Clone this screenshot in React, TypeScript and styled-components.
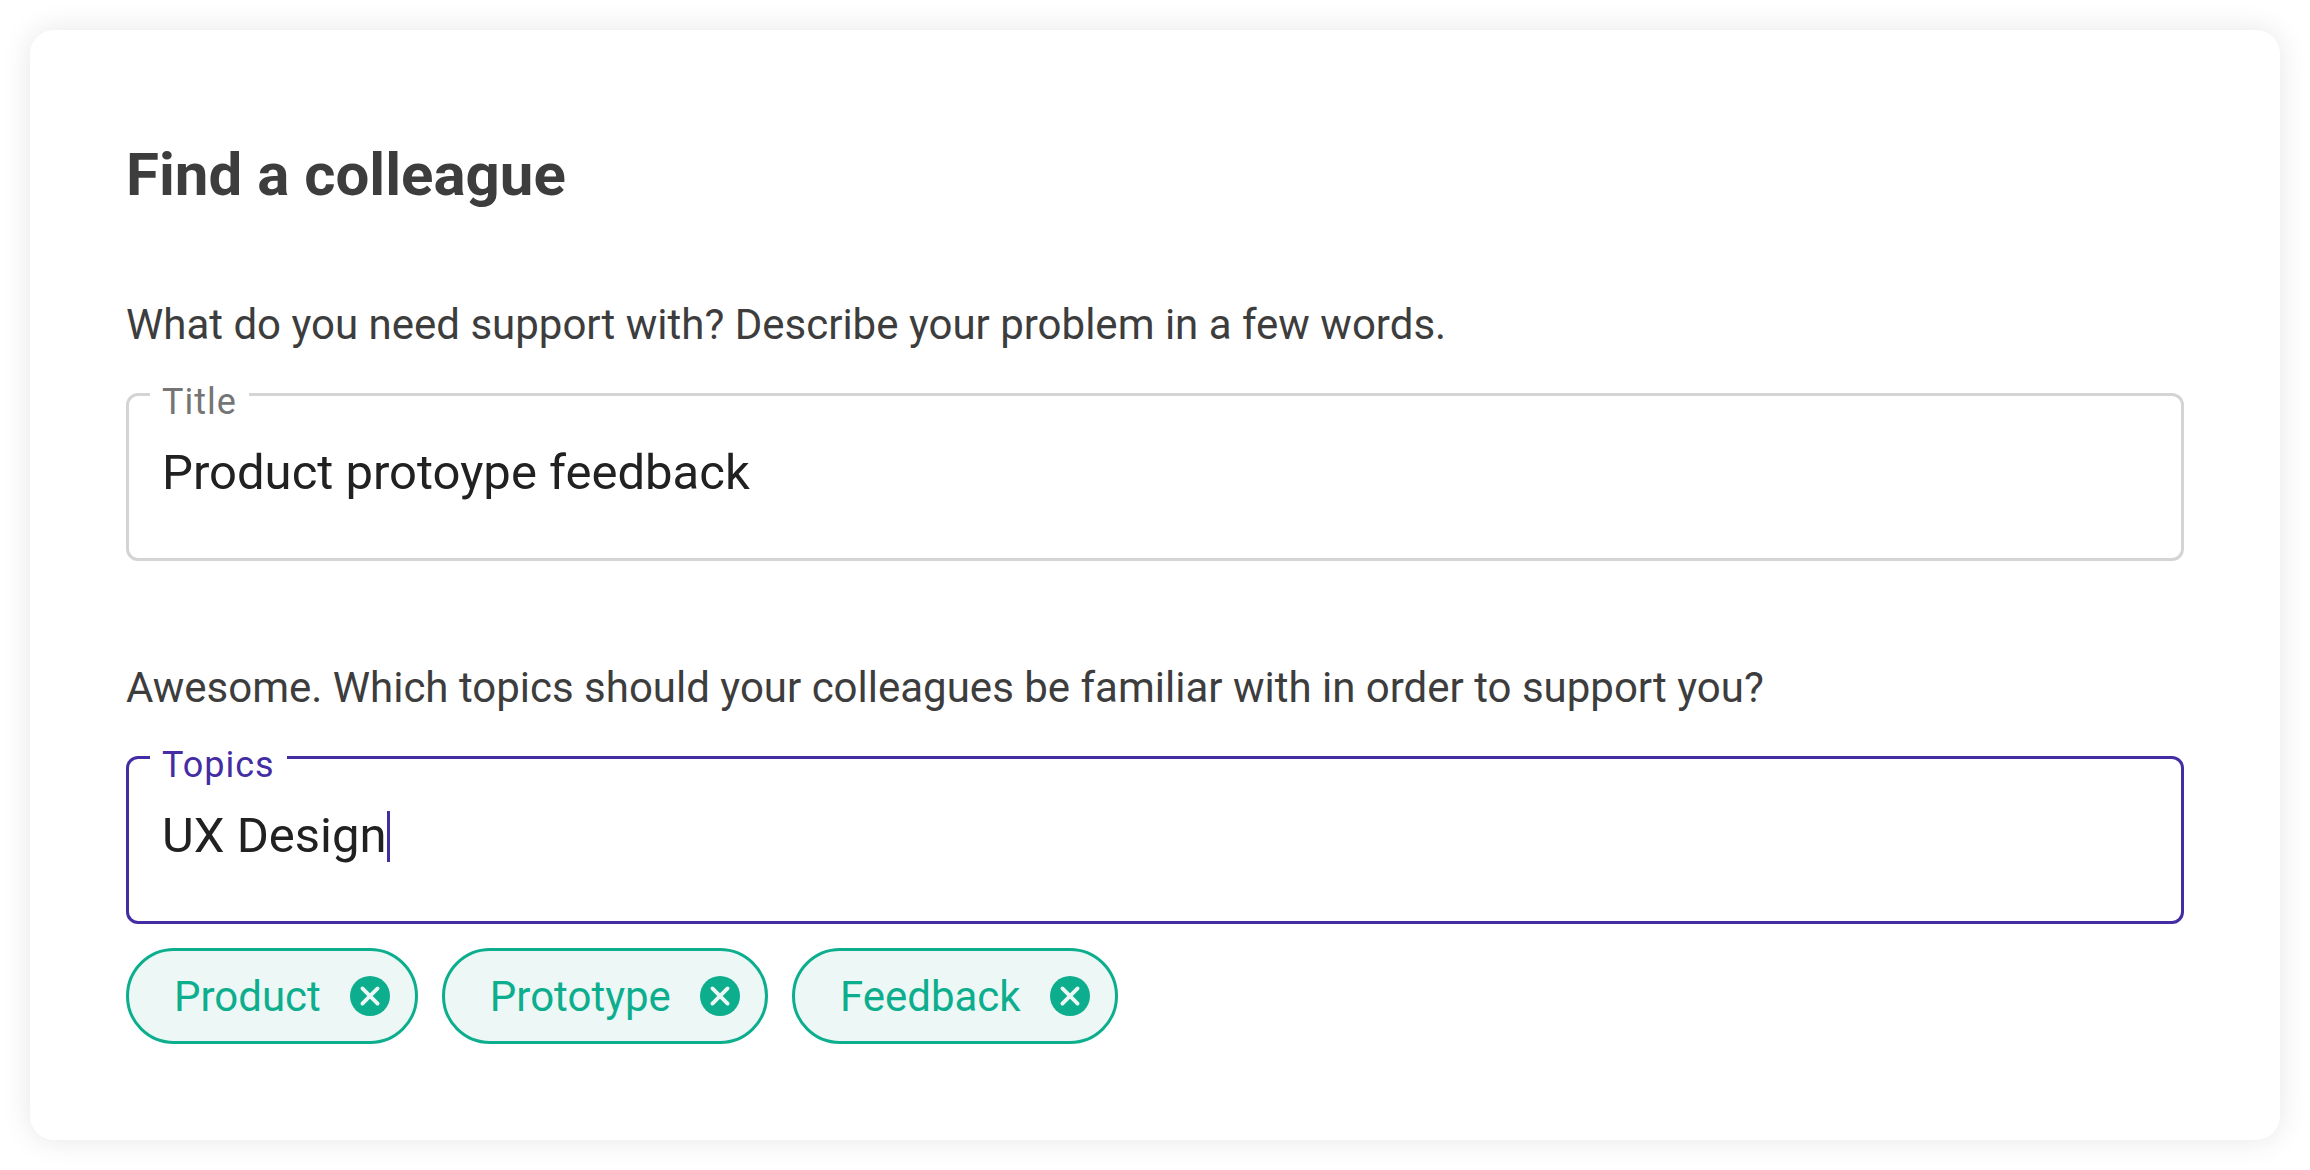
import React, { useState } from "react";
import styled, { createGlobalStyle } from "styled-components";

const GlobalStyle = createGlobalStyle`
  *, *::before, *::after { box-sizing: border-box; }
  body {
    margin: 0;
    background: #ffffff;
    font-family: Roboto, "Liberation Sans", sans-serif;
  }
`;

const Page = styled.main`
  padding: 30px;
`;

const Card = styled.form`
  padding: 96px;
  border-radius: 24px;
  background: #ffffff;
  box-shadow: 0 0 30px rgba(0, 0, 0, 0.1);
`;

const Heading = styled.h1`
  margin: 0 0 70px;
  font-size: 60px;
  line-height: 98px;
  font-weight: 700;
  color: #3d3d3d;
`;

const Section = styled.section`
  & + & {
    margin-top: 96px;
  }
`;

const Question = styled.p`
  margin: 0 0 37px;
  font-size: 42px;
  line-height: 62px;
  color: #3d3d3d;
`;

const Field = styled.div<{ $active?: boolean }>`
  position: relative;
  display: flex;
  align-items: center;
  height: 168px;
  padding: 0 33px 8px;
  border: 3px solid ${(p) => (p.$active ? "#442ca3" : "#d4d4d4")};
  border-radius: 12px;
`;

const FieldLabel = styled.label<{ $active?: boolean }>`
  position: absolute;
  top: -18px;
  left: 21px;
  padding: 0 12px;
  background: #ffffff;
  font-size: 36px;
  line-height: 48px;
  letter-spacing: 1px;
  color: ${(p) => (p.$active ? "#442ca3" : "#757575")};
`;

const FieldInput = styled.input<{ $fit?: boolean }>`
  ${(p) => (p.$fit ? "field-sizing: content;" : "flex: 1;")}
  min-width: 0;
  padding: 0;
  border: 0;
  outline: 0;
  background: transparent;
  font-family: inherit;
  font-size: 49px;
  line-height: 72px;
  color: #212121;
  caret-color: transparent;
`;

const Caret = styled.span`
  width: 3px;
  height: 51px;
  background: #442ca3;
`;

const Chips = styled.ul`
  display: flex;
  flex-wrap: wrap;
  gap: 24px;
  margin: 24px 0 0;
  padding: 0;
  list-style: none;
`;

const Chip = styled.li`
  display: flex;
  align-items: center;
  gap: 25px;
  height: 96px;
  padding: 0 21px 0 45px;
  border: 3px solid #0cae8d;
  border-radius: 48px;
  background: #edf8f6;
  color: #0cae8d;
`;

const ChipText = styled.span`
  padding-top: 2px;
  font-size: 42px;
  line-height: 62px;
`;

const RemoveButton = styled.button`
  display: flex;
  padding: 0;
  border: 0;
  background: none;
  color: inherit;
  cursor: pointer;
`;

const CancelIcon = () => (
  <svg width="48" height="48" viewBox="0 0 24 24" fill="currentColor" aria-hidden="true">
    <circle cx="12" cy="12" r="10" />
    <path
      d="M8.2 8.2l7.6 7.6M15.8 8.2l-7.6 7.6"
      stroke="#edf8f6"
      strokeWidth="1.9"
      strokeLinecap="round"
    />
  </svg>
);

export default function App() {
  const [title, setTitle] = useState("Product protoype feedback");
  const [topic, setTopic] = useState("UX Design");
  const [topics, setTopics] = useState(["Product", "Prototype", "Feedback"]);

  return (
    <>
      <GlobalStyle />
      <Page>
        <Card onSubmit={(e) => e.preventDefault()}>
          <Heading>Find a colleague</Heading>
          <Section>
            <Question>What do you need support with? Describe your problem in a few words.</Question>
            <Field>
              <FieldLabel htmlFor="title">Title</FieldLabel>
              <FieldInput id="title" type="text" value={title} onChange={(e) => setTitle(e.target.value)} />
            </Field>
          </Section>
          <Section>
            <Question>Awesome. Which topics should your colleagues be familiar with in order to support you?</Question>
            <Field $active>
              <FieldLabel $active htmlFor="topics">Topics</FieldLabel>
              <FieldInput $fit id="topics" type="text" value={topic} onChange={(e) => setTopic(e.target.value)} />
              <Caret />
            </Field>
            <Chips>
              {topics.map((name) => (
                <Chip key={name}>
                  <ChipText>{name}</ChipText>
                  <RemoveButton
                    type="button"
                    aria-label={`Remove ${name}`}
                    onClick={() => setTopics(topics.filter((t) => t !== name))}
                  >
                    <CancelIcon />
                  </RemoveButton>
                </Chip>
              ))}
            </Chips>
          </Section>
        </Card>
      </Page>
    </>
  );
}
